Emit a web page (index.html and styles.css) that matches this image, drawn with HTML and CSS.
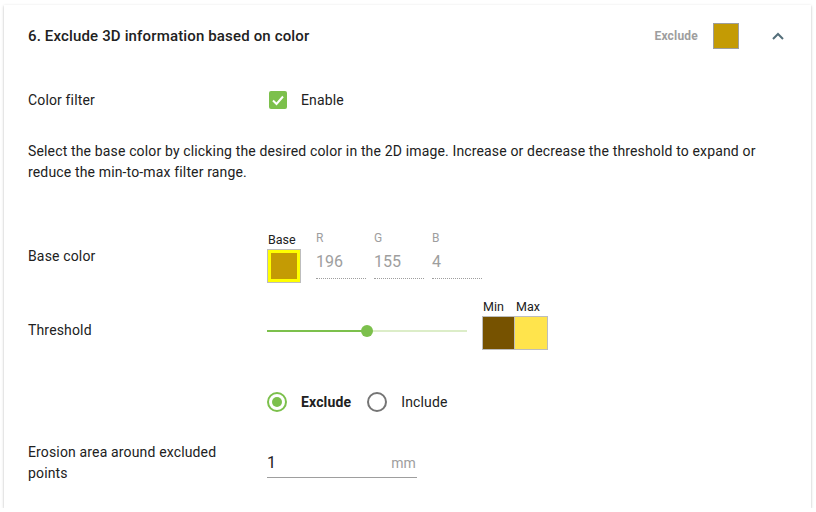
FILE: index.html
```html
<!DOCTYPE html>
<html>
<head>
<meta charset="utf-8">
<link rel="stylesheet" href="styles.css">
</head>
<body>
<div class="card">
  <div class="header">
    <div class="title">6. Exclude 3D information based on color</div>
    <div class="summary">
      <span class="summary-mode">Exclude</span>
      <span class="summary-swatch"></span>
      <svg class="chevron" width="12" height="8" viewBox="0 0 12 8"><polyline points="1,7 6,2 11,7" fill="none" stroke="#546e7a" stroke-width="2"/></svg>
    </div>
  </div>
  <div class="body">
    <div class="row row-filter">
      <div class="label">Color filter</div>
      <div class="control check">
        <span class="checkbox"><svg width="18" height="18" viewBox="0 0 18 18"><polyline points="4,9.5 7.5,13 14,5.5" fill="none" stroke="#fff" stroke-width="2"/></svg></span>
        <span>Enable</span>
      </div>
    </div>
    <p class="desc">Select the base color by clicking the desired color in the 2D image. Increase or decrease the threshold to expand or reduce the min-to-max filter range.</p>
    <div class="row row-base">
      <div class="label label-base">Base color</div>
      <div class="control base-group">
        <div class="base-col">
          <div class="small-label">Base</div>
          <div class="base-swatch"></div>
        </div>
        <div class="rgb-col">
          <div class="rgb-label">R</div>
          <div class="rgb-value">196</div>
        </div>
        <div class="rgb-col">
          <div class="rgb-label">G</div>
          <div class="rgb-value">155</div>
        </div>
        <div class="rgb-col">
          <div class="rgb-label">B</div>
          <div class="rgb-value">4</div>
        </div>
      </div>
    </div>
    <div class="row row-threshold">
      <div class="label label-thr">Threshold</div>
      <div class="slider">
        <div class="track-active"></div>
        <div class="thumb"></div>
      </div>
      <div class="minmax">
        <div class="mm-col">
          <div class="small-label">Min</div>
          <div class="mm-swatch min"></div>
        </div>
        <div class="mm-col">
          <div class="small-label">Max</div>
          <div class="mm-swatch max"></div>
        </div>
      </div>
    </div>
    <div class="row row-radio">
      <div class="label"></div>
      <div class="control radios">
        <span class="radio on"><span class="dot"></span></span>
        <span class="radio-text bold">Exclude</span>
        <span class="radio"></span>
        <span class="radio-text">Include</span>
      </div>
    </div>
    <div class="row row-erosion">
      <div class="label label-erosion">Erosion area around excluded points</div>
      <div class="control">
        <div class="num-input">
          <span class="num">1</span>
          <span class="unit">mm</span>
        </div>
      </div>
    </div>
  </div>
</div>
</body>
</html>
```
FILE: styles.css
```css
* { box-sizing: border-box; }
html, body { margin: 0; padding: 0; background: #fff; }
body {
  font-family: Roboto, "Liberation Sans", sans-serif;
  color: #212121;
  font-size: 14px;
  letter-spacing: 0.15px;
}
.card {
  margin: 5px 5px 0 4px;
  height: 503px;
  background: #fff;
  box-shadow: 0 1px 3px rgba(0,0,0,0.2), 0 1px 1px rgba(0,0,0,0.14), 0 2px 1px -1px rgba(0,0,0,0.12);
}
.header {
  height: 62px;
  display: flex;
  align-items: center;
  justify-content: space-between;
  padding: 0 27px 0 24px;
}
.title { font-size: 15px; font-weight: 500; color: #212121; }
.summary { display: flex; align-items: center; }
.summary-mode { font-size: 12px; font-weight: 700; color: #9e9e9e; letter-spacing: 0.2px; }
.summary-swatch {
  width: 26px; height: 26px;
  margin-left: 15px;
  background: #c49b04;
  border: 1px solid #9e9e9e;
}
.chevron { margin-left: 33px; }
.body { padding: 0 24px; }
.row { display: flex; align-items: center; }
.label { width: 240px; flex: none; line-height: 21px; }
.row-filter { height: 40px; margin-top: 13px; }
.check { display: flex; align-items: center; }
.checkbox {
  width: 18px; height: 18px;
  border-radius: 2px;
  background: #7cc04c;
  margin-left: 1px;
  margin-right: 14px;
  display: flex;
}
.desc { margin: 21px 0 0; line-height: 21px; }
.row-base { margin-top: 49px; align-items: flex-start; }
.label-base { margin-top: 14px; }
.base-group { display: flex; align-items: flex-start; }
.base-col { display: flex; flex-direction: column; width: 34px; margin-left: -1px; }
.small-label { font-size: 12.5px; line-height: 15px; color: #212121; letter-spacing: 0; }
.base-col .small-label { padding-left: 1px; }
.base-swatch {
  margin-top: 2px;
  width: 34px; height: 34px;
  border: 1px solid #bdbdbd;
  box-shadow: inset 0 0 0 3px #ffff00;
  background: #c49b04;
}
.rgb-col { width: 50px; margin-left: 15px; }
.rgb-col + .rgb-col { margin-left: 8px; }
.rgb-label { font-size: 12px; line-height: 13px; color: #9e9e9e; letter-spacing: 0; }
.rgb-value {
  font-size: 16px; line-height: 20px; color: #9e9e9e;
  padding-top: 7px; padding-bottom: 6px;
  border-bottom: 1px dotted #9e9e9e;
  letter-spacing: 0;
}
.row-threshold { margin-top: 16px; }
.label-thr, .slider { margin-top: 12px; }
.slider {
  position: relative;
  width: 200px; height: 2px;
  background: #dcedc8;
  margin-left: -1px;
}
.track-active { width: 100px; height: 2px; background: #7cc04c; }
.thumb {
  position: absolute;
  left: 94px; top: -5px;
  width: 12px; height: 12px;
  border-radius: 50%;
  background: #7cc04c;
}
.minmax { display: flex; margin-left: 15px; }
.mm-col { display: flex; flex-direction: column; }
.mm-col .small-label { margin: 0 0 2px 1px; }
.mm-swatch { width: 33px; height: 34px; border: 1px solid #bdbdbd; }
.mm-col + .mm-col .mm-swatch { border-left: none; }
.min { background: #765200; }
.max { background: #ffe44c; }
.row-radio { margin-top: 42px; height: 20px; }
.radios { display: flex; align-items: center; margin-left: -1px; }
.radio {
  width: 20px; height: 20px;
  border-radius: 50%;
  border: 2px solid #757575;
  display: flex; align-items: center; justify-content: center;
}
.radio.on { border-color: #7cc04c; }
.dot { width: 10px; height: 10px; border-radius: 50%; background: #7cc04c; }
.radio-text { margin-left: 14px; margin-right: 16px; }
.bold { font-weight: 700; }
.row-erosion { margin-top: 30px; align-items: flex-start; }
.label-erosion { padding-right: 30px; }
.num-input {
  width: 150px;
  display: flex; align-items: baseline; justify-content: space-between;
  border-bottom: 1px solid #9e9e9e;
  padding: 0 1px 4px 0;
  margin-left: -1px;
  margin-top: 11px;
}
.num { font-size: 16px; line-height: 20px; color: #212121; }
.unit { font-size: 14px; color: #9e9e9e; }
```
